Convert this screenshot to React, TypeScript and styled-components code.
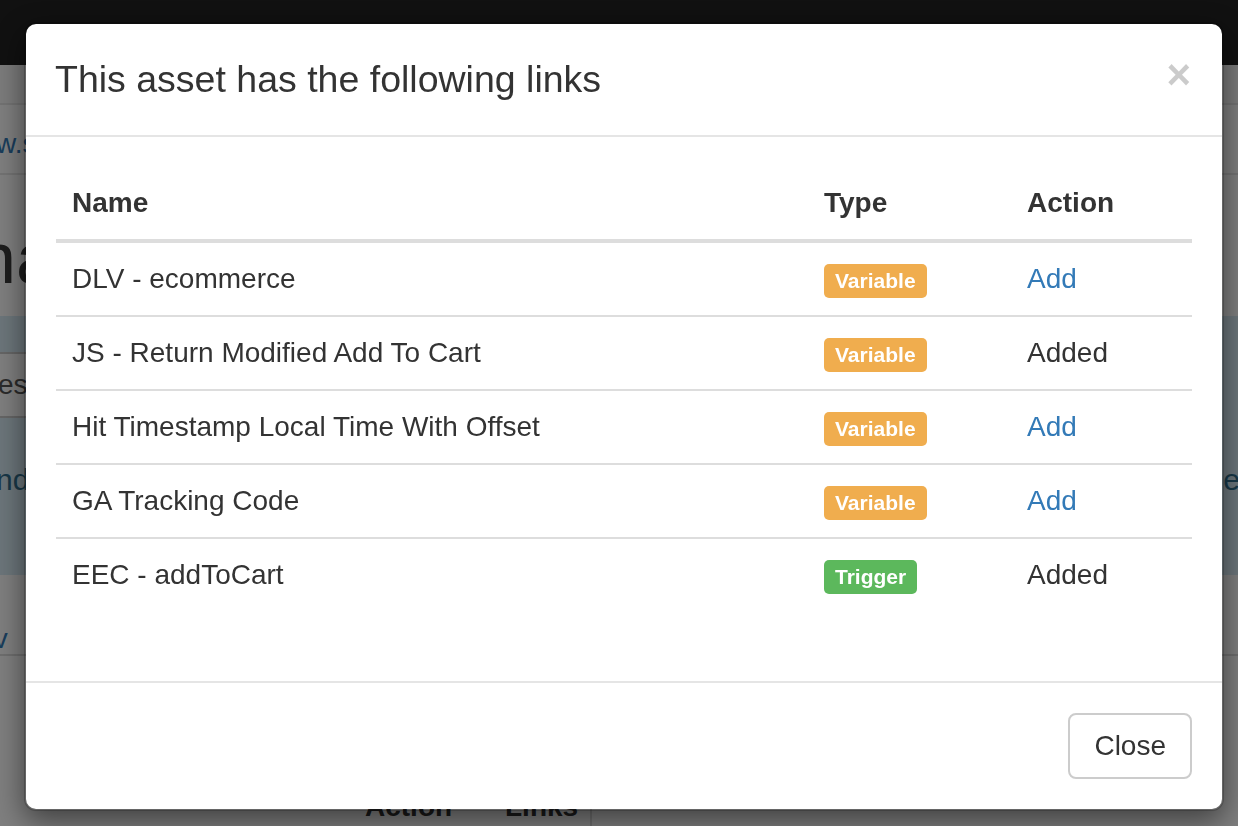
import React from "react";
import styled, { createGlobalStyle } from "styled-components";

const GlobalStyle = createGlobalStyle`
  html, body {
    margin: 0;
    padding: 0;
    width: 1238px;
    height: 826px;
    overflow: hidden;
  }
  body {
    font-family: "Liberation Sans", Arial, Helvetica, sans-serif;
    color: #333;
    background: #fff;
  }
  * { box-sizing: border-box; }
`;

/* ---------- underlying page (dimmed by the backdrop) ---------- */

const Page = styled.div`
  display: flex;
  flex-direction: column;
  width: 1238px;
  height: 826px;
  overflow: hidden;
  font-size: 28px;
  line-height: 40px;
`;

const Navbar = styled.div`
  height: 65px;
  background: #222;
  flex: none;
`;

const SubBar = styled.div`
  height: 40px;
  border-bottom: 2px solid #e7e7e7;
  background: #f8f8f8;
  flex: none;
`;

const UrlRow = styled.div`
  height: 70px;
  padding-top: 19px;
  border-bottom: 2px solid #e7e7e7;
  flex: none;
  white-space: nowrap;
`;

const PageLink = styled.a<{ $indent?: number }>`
  display: inline-block;
  color: #337ab7;
  text-decoration: none;
  margin-left: ${(p) => p.$indent ?? 0}px;
`;

const Heading = styled.h1`
  margin: 0;
  height: 141px;
  padding-top: 43px;
  margin-left: -24px;
  font-size: 72px;
  line-height: 80px;
  font-weight: 500;
  color: #3a3a3a;
  flex: none;
  white-space: nowrap;
`;

const InfoPanel = styled.div`
  height: 259px;
  background: #d9edf7;
  color: #31708f;
  padding-top: 36px;
  display: flex;
  flex-direction: column;
  flex: none;
`;

const SearchBox = styled.div`
  width: 620px;
  height: 66px;
  margin-left: -4px;
  background: #fff;
  border: 2px solid #ccc;
  color: #555;
  padding: 11px 0 0 0;
  flex: none;
`;

const InfoLine = styled.div`
  display: flex;
  justify-content: space-between;
  margin-top: 42px;
  font-size: 30px;
  white-space: nowrap;
`;

const InfoStart = styled.span`
  margin-left: -4px;
`;

const InfoEnd = styled.span`
  margin-right: -12px;
`;

const LinkRow = styled.div`
  height: 81px;
  padding-top: 44px;
  border-bottom: 2px solid #ddd;
  flex: none;
  white-space: nowrap;
`;

const BgTableHead = styled.div`
  display: grid;
  grid-template-columns: 349px 140px 103px 1fr;
  margin-top: 115px;
  font-weight: bold;
  color: #333;
`;

const BgCell = styled.div<{ $divider?: boolean }>`
  padding: 16px;
  line-height: 40px;
  border-right: ${(p) => (p.$divider ? "2px solid #ddd" : "none")};
`;

/* ---------- modal ---------- */

const Backdrop = styled.div`
  position: fixed;
  inset: 0;
  background: rgba(0, 0, 0, 0.5);
`;

const Modal = styled.div`
  position: fixed;
  top: 22px;
  left: 24px;
  width: 1200px;
  background: #fff;
  border: 2px solid rgba(0, 0, 0, 0.2);
  border-radius: 12px;
  background-clip: padding-box;
  box-shadow: 0 10px 30px rgba(0, 0, 0, 0.5);
  font-size: 28px;
  line-height: 40px;
  color: #333;
`;

const ModalHeader = styled.div`
  display: flex;
  justify-content: space-between;
  align-items: flex-start;
  padding: 30px 30px 30px 29px;
  border-bottom: 2px solid #e5e5e5;
`;

const ModalTitle = styled.h4`
  margin: 0;
  font-size: 37.5px;
  line-height: 51.4px;
  font-weight: normal;
  color: #333;
`;

const CloseX = styled.button`
  border: 0;
  background: transparent;
  padding: 0;
  margin: 0 1px 0 0;
  font-family: "Liberation Sans", Arial, sans-serif;
  font-size: 42px;
  font-weight: bold;
  line-height: 1;
  color: #000;
  opacity: 0.2;
  cursor: pointer;
`;

const ModalBody = styled.div`
  padding: 30px;
`;

const LinksTable = styled.table`
  width: 100%;
  border-collapse: collapse;
  border-spacing: 0;
  margin-bottom: 40px;
`;

const Th = styled.th<{ $width?: number }>`
  text-align: left;
  vertical-align: bottom;
  padding: 16px;
  line-height: 40px;
  font-weight: bold;
  border-bottom: 4px solid #ddd;
  width: ${(p) => (p.$width ? `${p.$width}px` : "auto")};
`;

const Td = styled.td`
  padding: 16px;
  line-height: 40px;
  vertical-align: top;
  border-top: 2px solid #ddd;
`;

const Badge = styled.span<{ $kind: "Variable" | "Trigger" }>`
  display: inline-block;
  padding: 6px 11px;
  font-size: 21px;
  line-height: 22px;
  font-weight: bold;
  color: #fff;
  border-radius: 5px;
  vertical-align: baseline;
  background: ${(p) => (p.$kind === "Trigger" ? "#5cb85c" : "#f0ad4e")};
`;

const AddLink = styled.a`
  color: #337ab7;
  text-decoration: none;
  cursor: pointer;
`;

const ModalFooter = styled.div`
  display: flex;
  justify-content: flex-end;
  padding: 30px;
  border-top: 2px solid #e5e5e5;
`;

const Button = styled.button`
  font-family: "Liberation Sans", Arial, sans-serif;
  font-size: 28px;
  line-height: 40px;
  padding: 11px 24px;
  color: #333;
  background: #fff;
  border: 2px solid #ccc;
  border-radius: 8px;
  cursor: pointer;
`;

type Row = { name: string; type: "Variable" | "Trigger"; added: boolean };

const rows: Row[] = [
  { name: "DLV - ecommerce", type: "Variable", added: false },
  { name: "JS - Return Modified Add To Cart", type: "Variable", added: true },
  { name: "Hit Timestamp Local Time With Offset", type: "Variable", added: false },
  { name: "GA Tracking Code", type: "Variable", added: false },
  { name: "EEC - addToCart", type: "Trigger", added: true },
];

export default function App() {
  return (
    <>
      <GlobalStyle />
      <Page>
        <Navbar />
        <SubBar />
        <UrlRow>
          <PageLink $indent={-4}>w.simoahava.com</PageLink>
        </UrlRow>
        <Heading>name</Heading>
        <InfoPanel>
          <SearchBox>est</SearchBox>
          <InfoLine>
            <InfoStart>nd the assets</InfoStart>
            <InfoEnd>manager</InfoEnd>
          </InfoLine>
        </InfoPanel>
        <LinkRow>
          <PageLink $indent={-42}>Dev</PageLink>
        </LinkRow>
        <BgTableHead>
          <BgCell />
          <BgCell>Action</BgCell>
          <BgCell $divider>Links</BgCell>
          <BgCell />
        </BgTableHead>
      </Page>
      <Backdrop />
      <Modal role="dialog" aria-modal="true">
        <ModalHeader>
          <ModalTitle>This asset has the following links</ModalTitle>
          <CloseX aria-label="Close">×</CloseX>
        </ModalHeader>
        <ModalBody>
          <LinksTable>
            <thead>
              <tr>
                <Th>Name</Th>
                <Th $width={203}>Type</Th>
                <Th $width={181}>Action</Th>
              </tr>
            </thead>
            <tbody>
              {rows.map((r) => (
                <tr key={r.name}>
                  <Td>{r.name}</Td>
                  <Td>
                    <Badge $kind={r.type}>{r.type}</Badge>
                  </Td>
                  <Td>{r.added ? "Added" : <AddLink>Add</AddLink>}</Td>
                </tr>
              ))}
            </tbody>
          </LinksTable>
        </ModalBody>
        <ModalFooter>
          <Button>Close</Button>
        </ModalFooter>
      </Modal>
    </>
  );
}
